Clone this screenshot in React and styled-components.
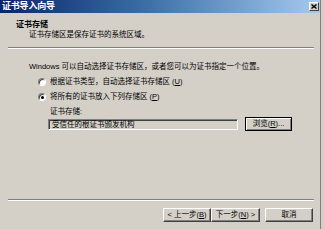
import styled, { createGlobalStyle } from 'styled-components';

const GlobalStyle = createGlobalStyle`
  html, body {
    margin: 0;
    padding: 0;
    background: #d4d0c8;
  }
  body {
    font-family: "Liberation Sans", "Noto Sans CJK SC", sans-serif;
    color: #000;
  }
`

const Window = styled.div`
  width: 320px;
  height: 229px;
  border-right: 1px solid #808080;
  display: flex;
  flex-direction: column;
  overflow: hidden;
`

const TitleBar = styled.div`
  height: 13px;
  flex: none;
  display: flex;
  align-items: center;
  justify-content: space-between;
  padding: 0 1px 0 2px;
  background: linear-gradient(to right, #0a246a 0%, #3a6ea5 45%, #a6caf0 100%);
`

const TitleText = styled.span`
  font-size: 9px;
  line-height: 13px;
  font-weight: 700;
  color: #fff;
  letter-spacing: -0.2px;
`

const CloseButton = styled.span`
  width: 10px;
  height: 9px;
  box-sizing: border-box;
  display: flex;
  align-items: center;
  justify-content: center;
  background: #d4d0c8;
  border: 1px solid;
  border-color: #fff #404040 #404040 #fff;
`

const Header = styled.div`
  height: 34px;
  flex: none;
  box-sizing: border-box;
  padding: 7px 0 0 16px;
`

const Headline = styled.div`
  font-size: 8px;
  line-height: 10px;
  font-weight: 700;
`

const Subtitle = styled.div`
  font-size: 7.5px;
  line-height: 10px;
  padding-left: 13px;
`

const Separator = styled.div`
  flex: none;
  margin: 0 6px 0 8px;
  border-top: 1px solid #808080;
  border-bottom: 1px solid #fff;
`

const Body = styled.div`
  flex: 1;
  display: flex;
  flex-direction: column;
  padding: 13px 0 0 29px;
  font-size: 7.5px;
  line-height: 10px;
`

const Intro = styled.div`
  margin-bottom: 5px;
`

const RadioRow = styled.label`
  display: flex;
  align-items: center;
  gap: 4px;
  height: 10px;
  padding-left: 9px;
  margin-bottom: 5px;
  white-space: pre;
`

const Radio = styled.span`
  position: relative;
  width: 8px;
  height: 8px;
  box-sizing: border-box;
  border-radius: 50%;
  border: 1px solid;
  border-color: #808080 #fff #fff #808080;
  background: #fff;
  box-shadow: inset 1px 1px 0 #404040;

  &::after {
    content: '';
    display: ${({ $checked }) => ($checked ? 'block' : 'none')};
    position: absolute;
    left: 2px;
    top: 2px;
    width: 3px;
    height: 3px;
    border-radius: 50%;
    background: #000;
  }
`

const StoreLabel = styled.div`
  padding-left: 21px;
  height: 10px;
`

const StoreRow = styled.div`
  display: flex;
  align-items: center;
  gap: 7px;
  padding-left: 19px;
  height: 14px;
`

const StoreBox = styled.div`
  width: 190px;
  height: 11px;
  box-sizing: border-box;
  border: 1px solid;
  border-color: #808080 #fff #fff #808080;
  box-shadow: inset 1px 1px 0 #404040;
  background: #d4d0c8;
  padding-left: 3px;
  font-size: 7.5px;
  line-height: 9px;
  white-space: nowrap;
`

const Button = styled.button`
  width: ${({ $width }) => $width}px;
  height: 14px;
  box-sizing: border-box;
  padding: 0;
  margin: 0;
  background: #d4d0c8;
  font-family: inherit;
  font-size: 7.5px;
  line-height: 10px;
  color: #000;
  border: 1px solid;
  border-color: ${({ $focus }) => ($focus ? '#000' : '#fff #404040 #404040 #fff')};
  box-shadow: ${({ $focus }) =>
    $focus ? 'inset 1px 1px 0 #fff, inset -1px -1px 0 #808080' : 'inset -1px -1px 0 #808080'};
  white-space: nowrap;
`

const Footer = styled.div`
  height: 28px;
  flex: none;
  box-sizing: border-box;
  display: flex;
  justify-content: flex-end;
  align-items: flex-start;
  padding: 7px 7px 0 0;
`

const NavGroup = styled.div`
  display: flex;
  margin-right: 5px;
`

const CloseIcon = () => (
  <svg width="6" height="5" viewBox="0 0 6 5">
    <path d="M0.5 0.5 L5.5 4.5 M5.5 0.5 L0.5 4.5" stroke="#000" strokeWidth="1.4" />
  </svg>
)

export default function App() {
  return (
    <>
      <GlobalStyle />
      <Window>
        <TitleBar>
          <TitleText>证书导入向导</TitleText>
          <CloseButton>
            <CloseIcon />
          </CloseButton>
        </TitleBar>
        <Header>
          <Headline>证书存储</Headline>
          <Subtitle>证书存储区是保存证书的系统区域。</Subtitle>
        </Header>
        <Separator />
        <Body>
          <Intro>Windows 可以自动选择证书存储区，或者您可以为证书指定一个位置。</Intro>
          <RadioRow>
            <Radio />
            <span>根据证书类型，自动选择证书存储区 (<u>U</u>)</span>
          </RadioRow>
          <RadioRow>
            <Radio $checked />
            <span>将所有的证书放入下列存储区 (<u>P</u>)</span>
          </RadioRow>
          <StoreLabel>证书存储:</StoreLabel>
          <StoreRow>
            <StoreBox>受信任的根证书颁发机构</StoreBox>
            <Button $width={47} $focus>浏览(<u>R</u>)...</Button>
          </StoreRow>
        </Body>
        <Separator />
        <Footer>
          <NavGroup>
            <Button $width={48}>&lt; 上一步(<u>B</u>)</Button>
            <Button $width={49}>下一步(<u>N</u>) &gt;</Button>
          </NavGroup>
          <Button $width={48}>取消</Button>
        </Footer>
      </Window>
    </>
  );
}
